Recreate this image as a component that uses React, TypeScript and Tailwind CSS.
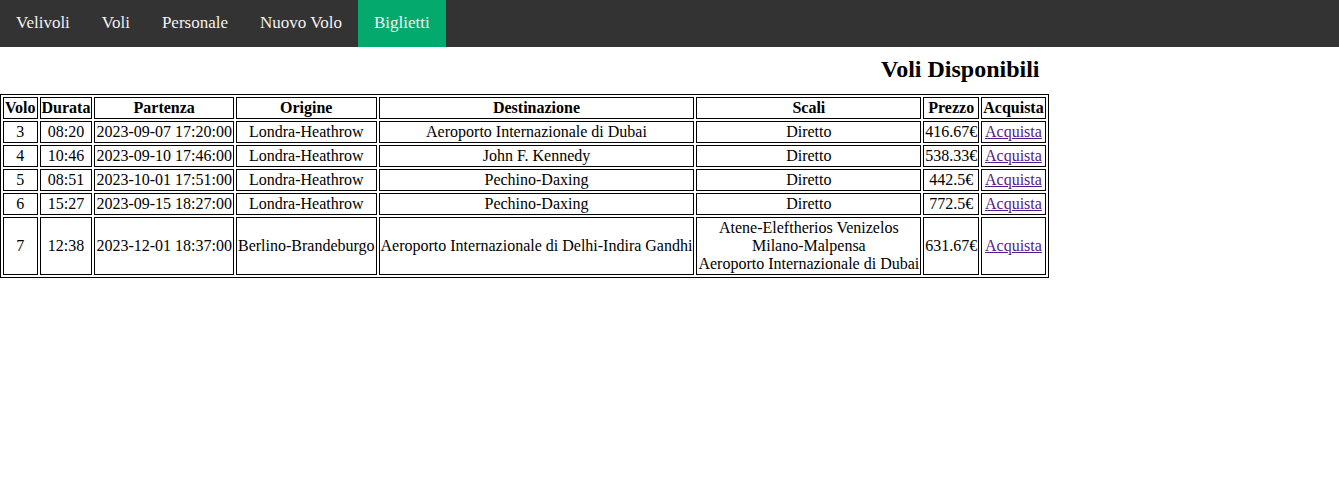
import React from "react";

const rows = [
  { volo: "3", durata: "08:20", partenza: "2023-09-07 17:20:00", origine: "Londra-Heathrow", dest: "Aeroporto Internazionale di Dubai", scali: ["Diretto"], prezzo: "416.67€" },
  { volo: "4", durata: "10:46", partenza: "2023-09-10 17:46:00", origine: "Londra-Heathrow", dest: "John F. Kennedy", scali: ["Diretto"], prezzo: "538.33€" },
  { volo: "5", durata: "08:51", partenza: "2023-10-01 17:51:00", origine: "Londra-Heathrow", dest: "Pechino-Daxing", scali: ["Diretto"], prezzo: "442.5€" },
  { volo: "6", durata: "15:27", partenza: "2023-09-15 18:27:00", origine: "Londra-Heathrow", dest: "Pechino-Daxing", scali: ["Diretto"], prezzo: "772.5€" },
  { volo: "7", durata: "12:38", partenza: "2023-12-01 18:37:00", origine: "Berlino-Brandeburgo", dest: "Aeroporto Internazionale di Delhi-Indira Gandhi", scali: ["Atene-Eleftherios Venizelos", "Milano-Malpensa", "Aeroporto Internazionale di Dubai"], prezzo: "631.67€" },
];

const nav = ["Velivoli", "Voli", "Personale", "Nuovo Volo", "Biglietti"];

export default function App() {
  const th = "border border-black p-[1px] font-bold text-center align-middle";
  const td = "border border-black p-[1px] text-center align-middle";
  return (
    <div className="min-h-screen bg-white text-black font-['Liberation_Serif','Times_New_Roman',serif] leading-[normal]">
      <div className="flex h-[47px] bg-[#333333]">
        {nav.map((n) => (
          <a
            key={n}
            className={`px-[16px] pt-[13px] pb-[15px] text-[17px] leading-[19px] text-[#f2f2f2] no-underline ${n === "Biglietti" ? "bg-[#04aa6d]" : ""}`}
          >
            {n}
          </a>
        ))}
      </div>
      <h2 className="mt-[8px] mb-[11px] h-[28px] pl-[881px] text-[24px] font-bold leading-[28px]">Voli Disponibili</h2>
      <table className="border-separate border-spacing-[2px] border border-black text-[16px] leading-[normal]">
        <thead>
          <tr>
            <th className={th}>Volo</th>
            <th className={th}>Durata</th>
            <th className={th}>Partenza</th>
            <th className={th}>Origine</th>
            <th className={th}>Destinazione</th>
            <th className={th}>Scali</th>
            <th className={th}>Prezzo</th>
            <th className={th}>Acquista</th>
          </tr>
        </thead>
        <tbody>
          {rows.map((r) => (
            <tr key={r.volo}>
              <td className={td}>{r.volo}</td>
              <td className={td}>{r.durata}</td>
              <td className={td}>{r.partenza}</td>
              <td className={td}>{r.origine}</td>
              <td className={td}>{r.dest}</td>
              <td className={td}>
                {r.scali.map((s, i) => (
                  <React.Fragment key={s}>
                    {i > 0 && <br />}
                    {s}
                  </React.Fragment>
                ))}
              </td>
              <td className={td}>{r.prezzo}</td>
              <td className={td}>
                <a href="#" className="text-[#551a8b] underline">Acquista</a>
              </td>
            </tr>
          ))}
        </tbody>
      </table>
    </div>
  );
}
